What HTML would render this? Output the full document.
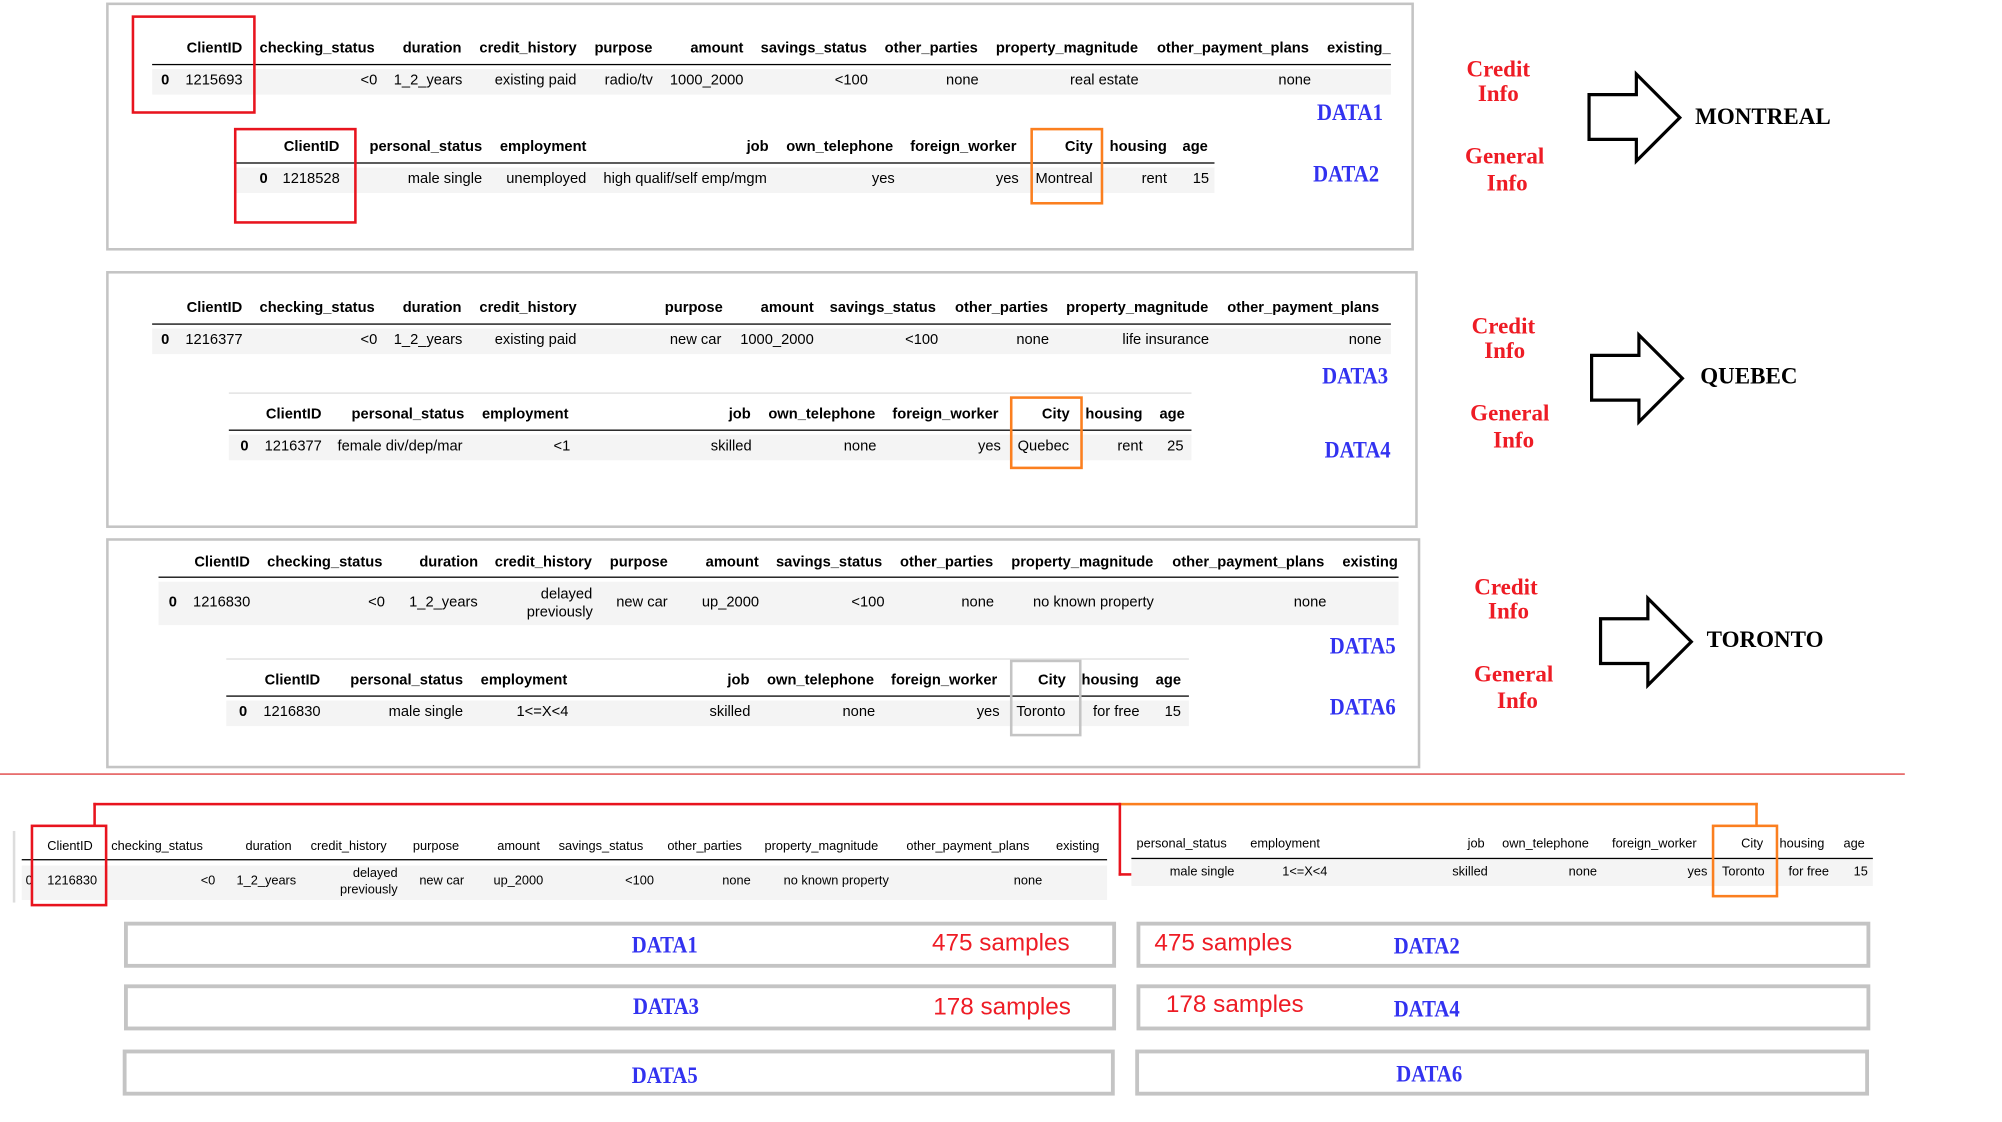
<!DOCTYPE html>
<html><head><meta charset="utf-8"><style>
html,body{margin:0;padding:0;background:#fff;width:2002px;height:1122px;overflow:hidden}
#s{position:absolute;left:0;top:0;width:1566px;height:878px;transform:scale(1.2784);transform-origin:0 0;font-family:"Liberation Sans",sans-serif}
#s div,#s span{position:absolute}
.t{font-size:11.5px;color:#000;white-space:nowrap;transform:translateY(-50%);line-height:1}
.b{font-weight:bold}
.s{font-size:10px}
.p{border:2px solid #c4c4c4;box-sizing:border-box}
.bg{background:#f4f4f4}
.ul{height:1px;background:#000}
.rb{border:2px solid #e8141e;box-sizing:border-box}
.ob{border:2px solid #fb7f1f;box-sizing:border-box}
.gb{border:2px solid #c4c4c4;box-sizing:border-box}
.D{font-family:"Liberation Serif",serif;font-weight:bold;font-size:18px;color:#3232f0;transform:translate(-50%,-50%) scaleX(0.9);white-space:nowrap;line-height:1}
.R{font-family:"Liberation Serif",serif;font-weight:bold;font-size:18px;color:#ee1c25;transform:translate(-50%,-50%);white-space:nowrap;line-height:1}
.C{font-family:"Liberation Serif",serif;font-weight:bold;font-size:18px;color:#000;transform:translateY(-50%);white-space:nowrap;line-height:1}
.S{font-size:19px;color:#ee1c25;transform:translateY(-50%);white-space:nowrap;line-height:1}
</style></head><body><div id="s">

<!-- Panel 1 -->
<div class="p" style="left:83px;top:2px;width:1023px;height:194px"></div>
<div class="bg" style="left:119px;top:54px;width:969px;height:20px"></div>
<div class="ul" style="left:119px;top:50px;width:969px"></div>
<span class="t b" style="left:146px;top:39px">ClientID</span>
<span class="t b" style="left:203px;top:39px">checking_status</span>
<span class="t b" style="left:315px;top:39px">duration</span>
<span class="t b" style="left:375px;top:39px">credit_history</span>
<span class="t b" style="left:465px;top:39px">purpose</span>
<span class="t b" style="left:540px;top:39px">amount</span>
<span class="t b" style="left:595px;top:39px">savings_status</span>
<span class="t b" style="left:692px;top:39px">other_parties</span>
<span class="t b" style="left:779px;top:39px">property_magnitude</span>
<span class="t b" style="left:905px;top:39px">other_payment_plans</span>
<span class="t b" style="left:1038px;top:39px">existing_</span>
<span class="t b" style="left:126px;top:64px">0</span>
<span class="t" style="left:145px;top:64px">1215693</span>
<span class="t" style="left:282px;top:64px">&lt;0</span>
<span class="t" style="left:308px;top:64px">1_2_years</span>
<span class="t" style="left:387px;top:64px">existing paid</span>
<span class="t" style="left:473px;top:64px">radio/tv</span>
<span class="t" style="left:524px;top:64px">1000_2000</span>
<span class="t" style="left:653px;top:64px">&lt;100</span>
<span class="t" style="left:740px;top:64px">none</span>
<span class="t" style="left:837px;top:64px">real estate</span>
<span class="t" style="left:1000px;top:64px">none</span>
<div class="rb" style="left:103px;top:12px;width:97px;height:77px"></div>

<div class="bg" style="left:183px;top:131px;width:767px;height:20px"></div>
<div class="ul" style="left:183px;top:127px;width:767px"></div>
<span class="t b" style="left:222px;top:116px">ClientID</span>
<span class="t b" style="left:289px;top:116px">personal_status</span>
<span class="t b" style="left:391px;top:116px">employment</span>
<span class="t b" style="left:584px;top:116px">job</span>
<span class="t b" style="left:615px;top:116px">own_telephone</span>
<span class="t b" style="left:712px;top:116px">foreign_worker</span>
<span class="t b" style="left:833px;top:116px">City</span>
<span class="t b" style="left:868px;top:116px">housing</span>
<span class="t b" style="left:925px;top:116px">age</span>
<span class="t b" style="left:203px;top:141px">0</span>
<span class="t" style="left:221px;top:141px">1218528</span>
<span class="t" style="left:319px;top:141px">male single</span>
<span class="t" style="left:396px;top:141px">unemployed</span>
<span class="t" style="left:472px;top:141px">high qualif/self emp/mgm</span>
<span class="t" style="left:682px;top:141px">yes</span>
<span class="t" style="left:779px;top:141px">yes</span>
<span class="t" style="left:810px;top:141px">Montreal</span>
<span class="t" style="left:893px;top:141px">rent</span>
<span class="t" style="left:933px;top:141px">15</span>
<div class="rb" style="left:183px;top:100px;width:96px;height:75px"></div>
<div class="ob" style="left:806px;top:100px;width:57px;height:60px"></div>
<span class="D" style="left:1056px;top:88px">DATA1</span>
<span class="D" style="left:1053px;top:136px">DATA2</span>
<span class="R" style="left:1172px;top:54px">Credit</span>
<span class="R" style="left:1172px;top:73px">Info</span>
<span class="R" style="left:1177px;top:122px">General</span>
<span class="R" style="left:1179px;top:143px">Info</span>
<svg style="position:absolute;left:1240px;top:55px" width="80" height="75"><path d="M3 19 H40 V3 L74 37 L40 71 V54 H3 Z" fill="none" stroke="#000" stroke-width="2.5"/></svg>
<span class="C" style="left:1326px;top:91px">MONTREAL</span>

<!-- Panel 2 -->
<div class="p" style="left:83px;top:212px;width:1026px;height:201px"></div>
<div class="bg" style="left:119px;top:257px;width:969px;height:20px"></div>
<div class="ul" style="left:119px;top:253px;width:969px"></div>
<span class="t b" style="left:146px;top:242px">ClientID</span>
<span class="t b" style="left:203px;top:242px">checking_status</span>
<span class="t b" style="left:315px;top:242px">duration</span>
<span class="t b" style="left:375px;top:242px">credit_history</span>
<span class="t b" style="left:520px;top:242px">purpose</span>
<span class="t b" style="left:595px;top:242px">amount</span>
<span class="t b" style="left:649px;top:242px">savings_status</span>
<span class="t b" style="left:747px;top:242px">other_parties</span>
<span class="t b" style="left:834px;top:242px">property_magnitude</span>
<span class="t b" style="left:960px;top:242px">other_payment_plans</span>
<span class="t b" style="left:126px;top:267px">0</span>
<span class="t" style="left:145px;top:267px">1216377</span>
<span class="t" style="left:282px;top:267px">&lt;0</span>
<span class="t" style="left:308px;top:267px">1_2_years</span>
<span class="t" style="left:387px;top:267px">existing paid</span>
<span class="t" style="left:524px;top:267px">new car</span>
<span class="t" style="left:579px;top:267px">1000_2000</span>
<span class="t" style="left:708px;top:267px">&lt;100</span>
<span class="t" style="left:795px;top:267px">none</span>
<span class="t" style="left:878px;top:267px">life insurance</span>
<span class="t" style="left:1055px;top:267px">none</span>
<div style="left:179px;top:307px;width:753px;height:1px;background:#ddd"></div>
<div class="bg" style="left:179px;top:340px;width:753px;height:20px"></div>
<div class="ul" style="left:179px;top:336px;width:753px"></div>
<span class="t b" style="left:208px;top:325px">ClientID</span>
<span class="t b" style="left:275px;top:325px">personal_status</span>
<span class="t b" style="left:377px;top:325px">employment</span>
<span class="t b" style="left:570px;top:325px">job</span>
<span class="t b" style="left:601px;top:325px">own_telephone</span>
<span class="t b" style="left:698px;top:325px">foreign_worker</span>
<span class="t b" style="left:815px;top:325px">City</span>
<span class="t b" style="left:849px;top:325px">housing</span>
<span class="t b" style="left:907px;top:325px">age</span>
<span class="t b" style="left:188px;top:350px">0</span>
<span class="t" style="left:207px;top:350px">1216377</span>
<span class="t" style="left:264px;top:350px">female div/dep/mar</span>
<span class="t" style="left:433px;top:350px">&lt;1</span>
<span class="t" style="left:556px;top:350px">skilled</span>
<span class="t" style="left:660px;top:350px">none</span>
<span class="t" style="left:765px;top:350px">yes</span>
<span class="t" style="left:796px;top:350px">Quebec</span>
<span class="t" style="left:874px;top:350px">rent</span>
<span class="t" style="left:913px;top:350px">25</span>
<div class="ob" style="left:790px;top:310px;width:57px;height:57px"></div>
<span class="D" style="left:1060px;top:294px">DATA3</span>
<span class="D" style="left:1062px;top:352px">DATA4</span>
<span class="R" style="left:1176px;top:255px">Credit</span>
<span class="R" style="left:1177px;top:274px">Info</span>
<span class="R" style="left:1181px;top:323px">General</span>
<span class="R" style="left:1184px;top:344px">Info</span>
<svg style="position:absolute;left:1242px;top:259px" width="80" height="75"><path d="M3 19 H40 V3 L74 37 L40 71 V54 H3 Z" fill="none" stroke="#000" stroke-width="2.5"/></svg>
<span class="C" style="left:1330px;top:294px">QUEBEC</span>

<!-- Panel 3 -->
<div class="p" style="left:83px;top:421px;width:1028px;height:180px"></div>
<div class="bg" style="left:124px;top:455px;width:970px;height:34px"></div>
<div class="ul" style="left:124px;top:451px;width:970px"></div>
<span class="t b" style="left:152px;top:441px">ClientID</span>
<span class="t b" style="left:209px;top:441px">checking_status</span>
<span class="t b" style="left:328px;top:441px">duration</span>
<span class="t b" style="left:387px;top:441px">credit_history</span>
<span class="t b" style="left:477px;top:441px">purpose</span>
<span class="t b" style="left:552px;top:441px">amount</span>
<span class="t b" style="left:607px;top:441px">savings_status</span>
<span class="t b" style="left:704px;top:441px">other_parties</span>
<span class="t b" style="left:791px;top:441px">property_magnitude</span>
<span class="t b" style="left:917px;top:441px">other_payment_plans</span>
<span class="t b" style="left:1050px;top:441px">existing</span>
<span class="t b" style="left:132px;top:472px">0</span>
<span class="t" style="left:151px;top:472px">1216830</span>
<span class="t" style="left:288px;top:472px">&lt;0</span>
<span class="t" style="left:320px;top:472px">1_2_years</span>
<span class="t" style="left:423px;top:466px">delayed</span>
<span class="t" style="left:412px;top:480px">previously</span>
<span class="t" style="left:482px;top:472px">new car</span>
<span class="t" style="left:549px;top:472px">up_2000</span>
<span class="t" style="left:666px;top:472px">&lt;100</span>
<span class="t" style="left:752px;top:472px">none</span>
<span class="t" style="left:808px;top:472px">no known property</span>
<span class="t" style="left:1012px;top:472px">none</span>
<div style="left:177px;top:515px;width:753px;height:1px;background:#ddd"></div>
<div class="bg" style="left:177px;top:548px;width:753px;height:20px"></div>
<div class="ul" style="left:177px;top:544px;width:753px"></div>
<span class="t b" style="left:207px;top:533px">ClientID</span>
<span class="t b" style="left:274px;top:533px">personal_status</span>
<span class="t b" style="left:376px;top:533px">employment</span>
<span class="t b" style="left:569px;top:533px">job</span>
<span class="t b" style="left:600px;top:533px">own_telephone</span>
<span class="t b" style="left:697px;top:533px">foreign_worker</span>
<span class="t b" style="left:812px;top:533px">City</span>
<span class="t b" style="left:846px;top:533px">housing</span>
<span class="t b" style="left:904px;top:533px">age</span>
<span class="t b" style="left:187px;top:558px">0</span>
<span class="t" style="left:206px;top:558px">1216830</span>
<span class="t" style="left:304px;top:558px">male single</span>
<span class="t" style="left:404px;top:558px">1&lt;=X&lt;4</span>
<span class="t" style="left:555px;top:558px">skilled</span>
<span class="t" style="left:659px;top:558px">none</span>
<span class="t" style="left:764px;top:558px">yes</span>
<span class="t" style="left:795px;top:558px">Toronto</span>
<span class="t" style="left:855px;top:558px">for free</span>
<span class="t" style="left:911px;top:558px">15</span>
<div class="gb" style="left:790px;top:516px;width:56px;height:60px"></div>
<span class="D" style="left:1066px;top:505px">DATA5</span>
<span class="D" style="left:1066px;top:553px">DATA6</span>
<span class="R" style="left:1178px;top:459px">Credit</span>
<span class="R" style="left:1180px;top:478px">Info</span>
<span class="R" style="left:1184px;top:527px">General</span>
<span class="R" style="left:1187px;top:548px">Info</span>
<svg style="position:absolute;left:1249px;top:465px" width="80" height="75"><path d="M3 19 H40 V3 L74 37 L40 71 V54 H3 Z" fill="none" stroke="#000" stroke-width="2.5"/></svg>
<span class="C" style="left:1335px;top:500px">TORONTO</span>

<div style="left:0;top:605px;width:1490px;height:1px;background:#d33"></div>

<!-- merged table -->
<div style="left:10px;top:650px;width:2px;height:56px;background:#ddd"></div>
<div class="bg" style="left:17px;top:677px;width:849px;height:27px"></div>
<div class="ul" style="left:17px;top:672px;width:849px"></div>
<span class="t s" style="left:37px;top:663px">ClientID</span>
<span class="t s" style="left:87px;top:663px">checking_status</span>
<span class="t s" style="left:192px;top:663px">duration</span>
<span class="t s" style="left:243px;top:663px">credit_history</span>
<span class="t s" style="left:323px;top:663px">purpose</span>
<span class="t s" style="left:389px;top:663px">amount</span>
<span class="t s" style="left:437px;top:663px">savings_status</span>
<span class="t s" style="left:522px;top:663px">other_parties</span>
<span class="t s" style="left:598px;top:663px">property_magnitude</span>
<span class="t s" style="left:709px;top:663px">other_payment_plans</span>
<span class="t s" style="left:826px;top:663px">existing</span>
<span class="t s" style="left:20px;top:690px">0</span>
<span class="t s" style="left:37px;top:690px">1216830</span>
<span class="t s" style="left:157px;top:690px">&lt;0</span>
<span class="t s" style="left:185px;top:690px">1_2_years</span>
<span class="t s" style="left:276px;top:684px">delayed</span>
<span class="t s" style="left:266px;top:697px">previously</span>
<span class="t s" style="left:328px;top:690px">new car</span>
<span class="t s" style="left:386px;top:690px">up_2000</span>
<span class="t s" style="left:489px;top:690px">&lt;100</span>
<span class="t s" style="left:565px;top:690px">none</span>
<span class="t s" style="left:613px;top:690px">no known property</span>
<span class="t s" style="left:793px;top:690px">none</span>
<div class="rb" style="left:24px;top:645px;width:60px;height:64px"></div>
<div style="left:73px;top:628px;width:803px;height:2px;background:#e8141e"></div>
<div style="left:73px;top:628px;width:2px;height:18px;background:#e8141e"></div>
<div style="left:875px;top:628px;width:500px;height:2px;background:#fb7f1f"></div>
<div style="left:1373px;top:628px;width:2px;height:18px;background:#fb7f1f"></div>
<div style="left:875px;top:628px;width:2px;height:57px;background:#e8141e"></div>
<div style="left:875px;top:683px;width:10px;height:2px;background:#e8141e"></div>

<div class="bg" style="left:885px;top:672px;width:580px;height:21px"></div>
<div class="ul" style="left:885px;top:671px;width:580px"></div>
<span class="t s" style="left:889px;top:661px">personal_status</span>
<span class="t s" style="left:978px;top:661px">employment</span>
<span class="t s" style="left:1148px;top:661px">job</span>
<span class="t s" style="left:1175px;top:661px">own_telephone</span>
<span class="t s" style="left:1261px;top:661px">foreign_worker</span>
<span class="t s" style="left:1362px;top:661px">City</span>
<span class="t s" style="left:1392px;top:661px">housing</span>
<span class="t s" style="left:1442px;top:661px">age</span>
<span class="t s" style="left:915px;top:683px">male single</span>
<span class="t s" style="left:1003px;top:683px">1&lt;=X&lt;4</span>
<span class="t s" style="left:1136px;top:683px">skilled</span>
<span class="t s" style="left:1227px;top:683px">none</span>
<span class="t s" style="left:1320px;top:683px">yes</span>
<span class="t s" style="left:1347px;top:683px">Toronto</span>
<span class="t s" style="left:1399px;top:683px">for free</span>
<span class="t s" style="left:1450px;top:683px">15</span>
<div class="ob" style="left:1339px;top:645px;width:52px;height:57px"></div>

<!-- bottom boxes -->
<div class="p" style="left:97px;top:721px;width:776px;height:36px;border-width:3px"></div>
<div class="p" style="left:889px;top:721px;width:574px;height:36px;border-width:3px"></div>
<div class="p" style="left:97px;top:770px;width:776px;height:36px;border-width:3px"></div>
<div class="p" style="left:889px;top:770px;width:574px;height:36px;border-width:3px"></div>
<div class="p" style="left:96px;top:821px;width:776px;height:36px;border-width:3px"></div>
<div class="p" style="left:888px;top:821px;width:574px;height:36px;border-width:3px"></div>
<span class="D" style="left:520px;top:739px">DATA1</span>
<span class="S" style="left:729px;top:738px">475 samples</span>
<span class="S" style="left:903px;top:738px">475 samples</span>
<span class="D" style="left:1116px;top:740px">DATA2</span>
<span class="D" style="left:521px;top:787px">DATA3</span>
<span class="S" style="left:730px;top:788px">178 samples</span>
<span class="S" style="left:912px;top:786px">178 samples</span>
<span class="D" style="left:1116px;top:789px">DATA4</span>
<span class="D" style="left:520px;top:841px">DATA5</span>
<span class="D" style="left:1118px;top:840px">DATA6</span>

</div></body></html>
